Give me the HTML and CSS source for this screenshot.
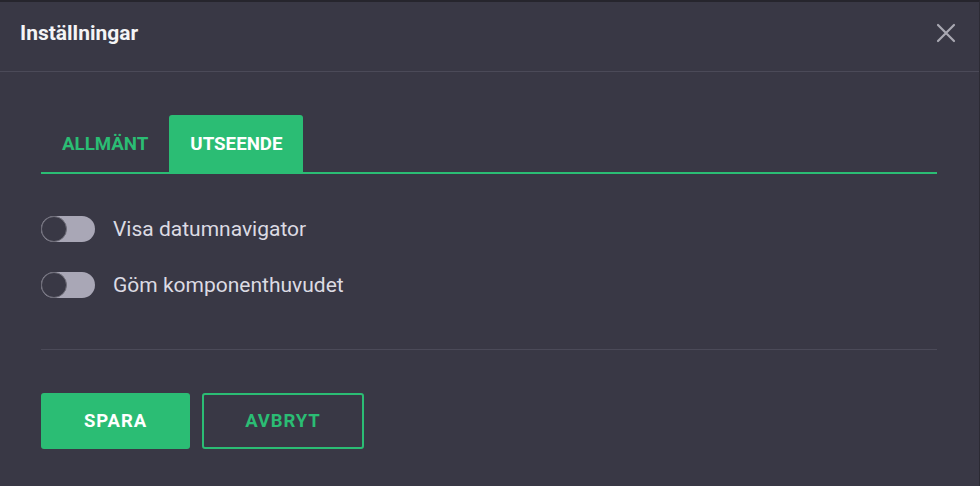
FILE: index.html
```html
<!DOCTYPE html>
<html>
<head>
  <title>Inställningar</title>
  <link rel="stylesheet" href="styles.css">
</head>
<body>
  <div class="dialog">
    <div class="header">
      <h3>Inställningar</h3>
      <button class="close" aria-label="Stäng">
        <svg width="20" height="20" viewBox="0 0 20 20">
          <path d="M2 2 L18 18 M18 2 L2 18" stroke="#a9a8b2" stroke-width="2.2" stroke-linecap="round"/>
        </svg>
      </button>
    </div>

    <div class="content">
      <div class="tabs">
        <div class="tab">ALLMÄNT</div>
        <div class="tab active">UTSEENDE</div>
      </div>

      <div class="options">
        <label class="option">
          <span class="toggle"><span class="knob"></span></span>
          Visa datumnavigator
        </label>
        <label class="option">
          <span class="toggle"><span class="knob"></span></span>
          Göm komponenthuvudet
        </label>
      </div>

      <div class="actions">
        <button class="btn primary">SPARA</button>
        <button class="btn outline">AVBRYT</button>
      </div>
    </div>
  </div>
</body>
</html>
```

FILE: styles.css
```css
body {
  font-family: Roboto, "Liberation Sans", sans-serif;
  background-color: #393845;
  margin: 0;
  color: #e2e1e8;
}
.dialog {
  height: 486px;
  box-sizing: border-box;
  border-top: 2px solid #26252d;
  border-right: 1px solid #2c2b34;
}
.header {
  height: 62px;
  display: flex;
  align-items: center;
  justify-content: space-between;
  padding: 0 23px 7px 20px;
  border-bottom: 1px solid #4b4a58;
}
.header h3 {
  margin: 0;
  font-size: 21px;
  font-weight: bold;
  color: #f4f4f6;
}
.close {
  background: none;
  border: none;
  padding: 0;
  display: flex;
  cursor: pointer;
}
.content {
  padding: 43px 42px 0 41px;
}
.tabs {
  display: flex;
  border-bottom: 2px solid #2bbd74;
}
.tab {
  height: 57px;
  padding: 0 21px;
  display: flex;
  align-items: center;
  font-size: 18.7px;
  font-weight: bold;
  color: #2bbd74;
  border-radius: 3px 3px 0 0;
}
.tab.active {
  background: #2bbd74;
  color: #fff;
}
.options {
  padding: 27px 0 36px;
  border-bottom: 1px solid #4b4a58;
}
.option {
  height: 56px;
  display: flex;
  align-items: center;
  font-size: 21px;
  color: #dcdbe3;
}
.toggle {
  width: 54px;
  height: 26px;
  border-radius: 13px;
  background: #a9a7b6;
  margin-right: 18px;
  display: flex;
  align-items: center;
}
.knob {
  width: 24px;
  height: 24px;
  border-radius: 50%;
  background: #393845;
  border: 1px solid #6e6d78;
  box-sizing: content-box;
}
.actions {
  display: flex;
  gap: 12px;
  padding-top: 43px;
}
.btn {
  height: 56px;
  font-family: Roboto, "Liberation Sans", sans-serif;
  font-size: 18.5px;
  font-weight: bold;
  letter-spacing: 0.9px;
  border-radius: 3px;
  cursor: pointer;
}
.primary {
  width: 149px;
  background: #2bbd74;
  border: none;
  color: #fff;
}
.outline {
  width: 162px;
  background: none;
  border: 2px solid #2bbd74;
  color: #2bbd74;
}
```
